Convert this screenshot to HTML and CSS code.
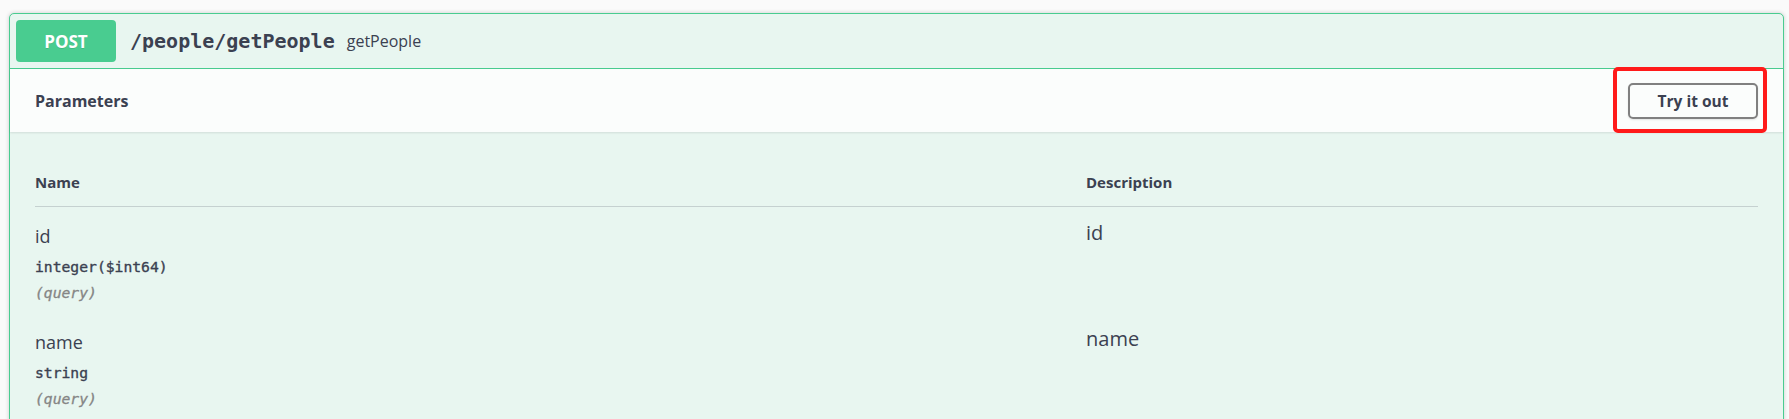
FILE: index.html
```html
<!DOCTYPE html>
<html lang="en">
<head>
<meta charset="utf-8">
<title>getPeople</title>
<link rel="stylesheet" href="styles.css">
</head>
<body>
<div class="page">
  <div class="opblock">
    <div class="summary">
      <span class="method">POST</span>
      <span class="path">/people/getPeople</span>
      <span class="summary-desc">getPeople</span>
    </div>
    <div class="section-header">
      <h4 class="section-title">Parameters</h4>
      <button class="try-out">Try it out</button>
      <div class="highlight"></div>
    </div>
    <div class="table-container">
      <div class="params">
        <div class="th">Name</div>
        <div class="th">Description</div>

        <div class="td td-name">
          <div class="param-name">id</div>
          <div class="param-type">integer($int64)</div>
          <div class="param-in">(query)</div>
        </div>
        <div class="td td-desc">
          <div class="param-desc">id</div>
        </div>

        <div class="td td-name">
          <div class="param-name">name</div>
          <div class="param-type">string</div>
          <div class="param-in">(query)</div>
        </div>
        <div class="td td-desc">
          <div class="param-desc">name</div>
        </div>
      </div>
    </div>
  </div>
</div>
</body>
</html>
```
FILE: styles.css
```css
* { box-sizing: border-box; }
html, body { margin: 0; padding: 0; }
body {
  background: #fafafa;
  color: #3b4151;
  font-family: "Open Sans", "Noto Sans", sans-serif;
  overflow: hidden;
}
.page {
  padding: 13px 5px 0 9px;
}
.opblock {
  background: #e8f6f0;
  border: 1px solid #49cc90;
  border-radius: 5px;
  box-shadow: 0 0 4px rgba(0,0,0,0.19);
  min-height: 420px;
}
.summary {
  display: flex;
  align-items: center;
  padding: 6px;
  border-bottom: 1px solid #49cc90;
}
.method {
  width: 100px;
  height: 42px;
  background: #49cc90;
  border-radius: 4px;
  color: #fff;
  font-weight: 700;
  font-size: 17px;
  display: flex;
  align-items: center;
  justify-content: center;
  text-shadow: 0 1px 0 rgba(0,0,0,0.1);
}
.path {
  margin-left: 14px;
  font-family: "DejaVu Sans Mono", "Liberation Mono", monospace;
  font-weight: 700;
  font-size: 20px;
  color: #3b4151;
}
.summary-desc {
  margin-left: 12px;
  font-size: 16px;
  color: #3b4151;
}
.section-header {
  position: relative;
  display: flex;
  align-items: center;
  justify-content: space-between;
  min-height: 63px;
  padding: 0 25px;
  background: rgba(255,255,255,0.8);
  box-shadow: 0 1px 2px rgba(0,0,0,0.1);
}
.section-title {
  margin: 0;
  font-size: 16px;
  font-weight: 700;
}
.try-out {
  width: 130px;
  height: 36px;
  border: 2px solid #808080;
  border-radius: 5px;
  background: transparent;
  color: #3b4151;
  font-family: "Open Sans", "Noto Sans", sans-serif;
  font-weight: 700;
  font-size: 15.5px;
  box-shadow: 0 1px 2px rgba(0,0,0,0.1);
  padding: 0;
}
.highlight {
  position: absolute;
  right: 16px;
  top: -2px;
  width: 154px;
  height: 66px;
  border: 4px solid #ff1a1a;
  border-radius: 5px;
}
.table-container {
  padding: 25px;
}
.params {
  display: grid;
  grid-template-columns: 1051px 1fr;
}
.th {
  font-size: 15px;
  font-weight: 700;
  line-height: 20px;
  padding: 15px 0 14px;
  border-bottom: 1px solid rgba(59,65,81,0.2);
}
.td {
  padding: 16px 0 10px;
}
.param-name {
  font-size: 18px;
  line-height: 26px;
}
.param-type {
  font-family: "DejaVu Sans Mono", "Liberation Mono", monospace;
  font-weight: 400;
  -webkit-text-stroke: 0.35px #3b4151;
  font-size: 14.7px;
  line-height: 20px;
  padding-top: 8px;
}
.param-in {
  font-family: "DejaVu Sans Mono", "Liberation Mono", monospace;
  font-style: italic;
  font-size: 14.7px;
  line-height: 20px;
  padding-top: 6px;
  color: #858585;
  -webkit-text-stroke: 0.3px #858585;
}
.param-desc {
  font-size: 20px;
  line-height: 26px;
  margin-top: -3px;
}
```
